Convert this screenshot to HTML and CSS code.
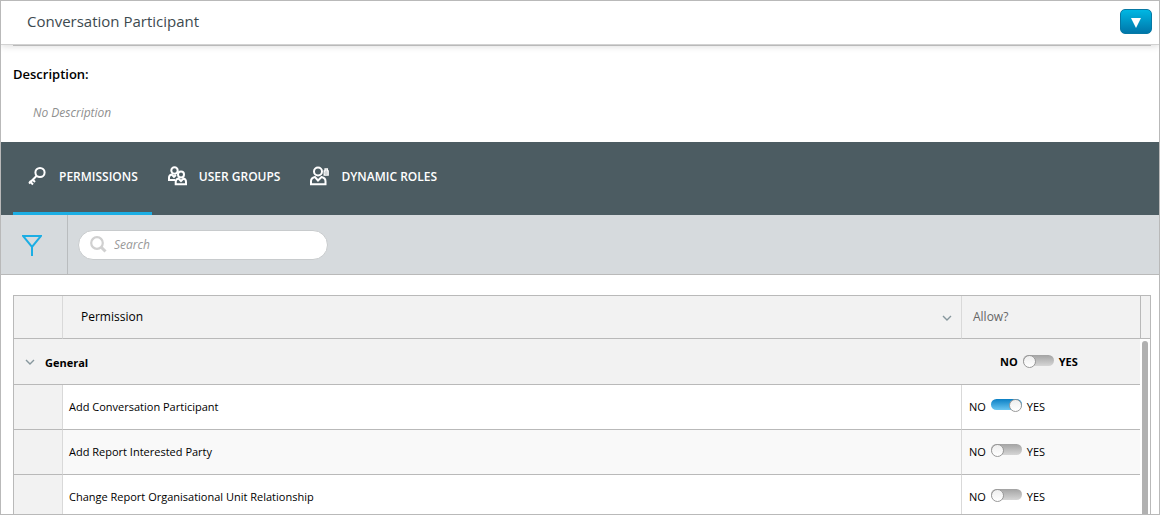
FILE: index.html
```html
<!DOCTYPE html>
<html lang="en">
<head>
    <meta charset="UTF-8">
    <meta name="viewport" content="width=device-width, initial-scale=1.0">
    <title>Conversation Participant</title>
    <link rel="stylesheet" href="styles.css">
</head>
<body>
    <div class="page">
        <header class="page-header">
            <h1>Conversation Participant</h1>
            <button type="button" class="menu-button" aria-label="Actions">
                <svg width="10" height="10" viewBox="0 0 10 10"><path d="M0 0h10L5 10z" fill="#fff"/></svg>
            </button>
        </header>

        <section class="description">
            <h2>Description:</h2>
            <p>No Description</p>
        </section>

        <nav class="tabs">
            <a href="#permissions" class="tab active">
                <svg class="tab-icon" viewBox="0 0 19 20">
                    <circle cx="12" cy="6.500" r="4.600"/>
                    <path d="M8.700 9.800L1 17.500M1.500 15l3.500 3.500M4.500 13.500l2.500 2.500"/>
                </svg>
                PERMISSIONS
            </a>
            <a href="#groups" class="tab">
                <svg class="tab-icon" viewBox="0 0 19 20">
                    <circle cx="6.500" cy="4.500" r="3.200"/>
                    <path d="M7 14H1v-2.200c0-2 1.200-2.900 2.700-3.300l2.300 2.300 2-1.800"/>
                    <circle cx="13" cy="8.500" r="3"/>
                    <path d="M10.500 12.500c-2 .4-2.800 1.400-2.800 3.200v2.600H18v-2.600c0-1.800-.8-2.800-2.500-3.200L13 15z"/>
                </svg>
                USER GROUPS
            </a>
            <a href="#roles" class="tab">
                <svg class="tab-icon" viewBox="0 0 19 20">
                    <circle cx="8" cy="5.500" r="4"/>
                    <path d="M5 11c-2.500.5-4 2-4 4.300v3h14.500v-3c0-2.300-1.500-3.800-4-4.300L8 14.500z"/>
                    <path d="M14.200 5h4v4h-4zM15 4.500V3h2.400v1.500M15 7h2.500" stroke-width="1.300"/>
                </svg>
                DYNAMIC ROLES
            </a>
        </nav>

        <div class="toolbar">
            <button type="button" class="filter-button" aria-label="Filter">
                <svg width="20" height="22" viewBox="0 0 20 22" fill="none" stroke="#1caee4" stroke-width="2">
                    <path d="M1 1h18l-9 11zM10 11v10"/>
                </svg>
            </button>
            <div class="search">
                <svg width="17" height="17" viewBox="0 0 17 17" fill="none" stroke="#d0d0d0">
                    <circle cx="7" cy="7" r="5.800" stroke-width="2.200"/>
                    <path d="M11 11l4.500 4.500" stroke-width="3"/>
                </svg>
                <input type="text" placeholder="Search" aria-label="Search">
            </div>
        </div>

        <div class="grid">
            <table>
                <colgroup>
                    <col class="col-group">
                    <col>
                    <col class="col-allow">
                </colgroup>
                <thead>
                    <tr>
                        <th></th>
                        <th class="sortable">
                            <div class="head-cell">
                                Permission
                                <svg class="chevron" viewBox="0 0 10 6"><path d="M1 1l4 4 4-4"/></svg>
                            </div>
                        </th>
                        <th class="allow-head">Allow?</th>
                    </tr>
                </thead>
                <tbody>
                    <tr class="group-row">
                        <td colspan="2">
                            <div class="group-name">
                                <svg class="chevron" viewBox="0 0 10 6"><path d="M1 1l4 4 4-4"/></svg>
                                General
                            </div>
                        </td>
                        <td><label class="toggle">NO <input type="checkbox"> YES</label></td>
                    </tr>
                    <tr>
                        <td class="indent"></td>
                        <td>Add Conversation Participant</td>
                        <td><label class="toggle">NO <input type="checkbox" checked> YES</label></td>
                    </tr>
                    <tr class="alt">
                        <td class="indent"></td>
                        <td>Add Report Interested Party</td>
                        <td><label class="toggle">NO <input type="checkbox"> YES</label></td>
                    </tr>
                    <tr>
                        <td class="indent"></td>
                        <td>Change Report Organisational Unit Relationship</td>
                        <td><label class="toggle">NO <input type="checkbox"> YES</label></td>
                    </tr>
                </tbody>
            </table>
            <div class="scroll">
                <div class="scroll-head"></div>
                <div class="scroll-thumb"></div>
            </div>
        </div>
    </div>
</body>
</html>
```

FILE: styles.css
```css
* {
    box-sizing: border-box;
}
body {
    margin: 0;
    font-family: "Open Sans", "Noto Sans", sans-serif;
    font-size: 12px;
    color: #000;
    background-color: #fff;
}
.page {
    display: flex;
    flex-direction: column;
    height: 100vh;
    border: 1px solid #b9b9b9;
    overflow: hidden;
}
.page-header {
    display: flex;
    justify-content: space-between;
    align-items: center;
    flex: none;
    height: 44px;
    padding: 0 7px 2px 26px;
    border-bottom: 1px solid #d2d2d2;
    box-shadow: 0 2px 6px rgba(0, 0, 0, 0.12);
}
h1 {
    margin: 0;
    padding-bottom: 2px;
    font-size: 15px;
    font-weight: 400;
    color: #3d4a4f;
}
.menu-button {
    display: flex;
    align-items: center;
    justify-content: center;
    width: 32px;
    height: 25px;
    padding: 2px 0 0;
    border: 1px solid #0679a5;
    border-radius: 5px;
    background: linear-gradient(#00b7e3, #0076a9);
    cursor: pointer;
}
.description {
    flex: none;
    height: 97px;
    margin: 0 8px 0 12px;
    padding-top: 19px;
    border-top: 1px solid #b9b9b9;
}
h2 {
    margin: 0;
    font-size: 13px;
    font-weight: 600;
    line-height: 18px;
}
.description p {
    margin: 21px 0 0 20px;
    font-style: italic;
    line-height: 18px;
    color: #8f8f8f;
}

/* Tabs */
.tabs {
    display: flex;
    gap: 1px;
    flex: none;
    height: 73px;
    padding-left: 12px;
    background-color: #4c5c62;
}
.tab {
    display: flex;
    align-items: center;
    gap: 12px;
    padding: 0 14px 2px 15px;
    border-bottom: 3px solid transparent;
    font-weight: 600;
    color: #fff;
    text-decoration: none;
}
.tab.active {
    border-bottom-color: #1caee4;
}
.tab-icon {
    width: 19px;
    height: 20px;
    fill: none;
    stroke: #fff;
    stroke-width: 2;
}

/* Filter and search */
.toolbar {
    display: flex;
    align-items: center;
    flex: none;
    height: 60px;
    border-bottom: 1px solid #b9b9b9;
    background-color: #d6dadd;
}
.filter-button {
    display: flex;
    align-items: center;
    align-self: stretch;
    width: 67px;
    padding: 2px 0 0 21px;
    border: none;
    border-right: 1px solid #b9bcbe;
    background: none;
    cursor: pointer;
}
.search {
    display: flex;
    align-items: center;
    gap: 7px;
    width: 250px;
    height: 30px;
    margin-left: 10px;
    padding: 0 11px;
    border: 1px solid #c8cbcd;
    border-radius: 15px;
    background-color: #fff;
}
.search input {
    flex: 1;
    min-width: 0;
    padding: 0;
    border: none;
    outline: none;
    background: none;
    font: inherit;
}
.search input::placeholder {
    font-style: italic;
    color: #999;
}

/* Permissions grid */
.grid {
    display: flex;
    align-items: flex-start;
    flex: 1;
    min-height: 0;
    margin: 20px 8px 0 12px;
    border: 1px solid #b9b9b9;
    border-bottom: none;
    overflow: hidden;
}
table {
    flex: 1;
    table-layout: fixed;
    border-collapse: separate;
    border-spacing: 0;
    font-size: 11px;
}
.col-group {
    width: 49px;
}
.col-allow {
    width: 178px;
}
th, td {
    height: 45px;
    padding: 0 6px 2px;
    border-bottom: 1px solid #b9b9b9;
    border-right: 1px solid #d9d9d9;
    text-align: left;
}
th:last-child, td:last-child {
    border-right: none;
}
th {
    height: 43px;
    background-color: #f2f2f2;
    font-size: 12px;
    font-weight: 400;
}
.alt {
    background-color: #f9f9f9;
}
.indent, .group-row {
    background-color: #f2f2f2;
}
.sortable {
    padding: 0 9px 2px 18px;
}
.head-cell, .group-name {
    display: flex;
    align-items: center;
}
.head-cell {
    justify-content: space-between;
}
.head-cell .chevron {
    margin-top: 3px;
}
.allow-head {
    padding-left: 11px;
    color: #666;
}
.chevron {
    width: 10px;
    height: 6px;
    fill: none;
    stroke: #87979d;
    stroke-width: 1.4;
}
.group-row td {
    height: 46px;
    padding-bottom: 0;
    border-right: none;
    font-weight: 700;
}
.group-name {
    gap: 10px;
    padding: 2px 0 0 5px;
}
.group-name .chevron {
    margin-bottom: 2px;
}
.group-row .toggle {
    margin-left: 31px;
}
.toggle {
    display: flex;
    align-items: center;
    gap: 5px;
    padding-left: 1px;
}
.toggle input {
    display: flex;
    width: 31px;
    height: 11px;
    margin: 0 0 3px;
    appearance: none;
    border-radius: 6px;
    background: linear-gradient(#a3a3a3, #d6d6d6);
    cursor: pointer;
}
.toggle input::before {
    content: "";
    width: 11px;
    height: 11px;
    border: 1px solid #999;
    border-radius: 50%;
    background: linear-gradient(#eee, #fff);
}
.toggle input:checked {
    justify-content: flex-end;
    background: linear-gradient(#0a7fc4, #6ac6f2);
}
.scroll {
    width: 10px;
}
.scroll-head {
    height: 43px;
    border-left: 1px solid #b9b9b9;
    border-bottom: 1px solid #b9b9b9;
    background-color: #f2f2f2;
}
.scroll-thumb {
    width: 6px;
    height: 300px;
    margin: 2px 0 0 2px;
    border-radius: 3px;
    background-color: #b1b1b1;
}
```
